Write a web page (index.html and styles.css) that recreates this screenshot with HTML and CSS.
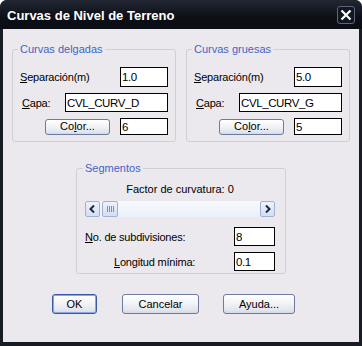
FILE: index.html
```html
<!DOCTYPE html>
<html lang="es">
<head>
    <meta charset="UTF-8">
    <title>Curvas de Nivel de Terreno</title>
    <link rel="stylesheet" href="styles.css">
</head>
<body>
    <div class="window">
        <div class="titlebar">
            <span class="title">Curvas de Nivel de Terreno</span>
            <span class="close">
                <svg width="12" height="12" viewBox="0 0 12 12"><path d="M1.5 1.5 L10.5 10.5 M10.5 1.5 L1.5 10.5" stroke="#fff" stroke-width="2.2" fill="none"/></svg>
            </span>
        </div>

        <div class="client">
            <div class="groups">
                <fieldset class="group">
                    <legend>Curvas delgadas</legend>
                    <div class="row row-sep">
                        <label><u>S</u>eparación(m)</label>
                        <input type="text" class="field field-num" value="1.0">
                    </div>
                    <div class="row row-capa">
                        <label><u>C</u>apa:</label>
                        <input type="text" class="field field-layer" value="CVL_CURV_D">
                    </div>
                    <div class="row row-color">
                        <button type="button" class="btn btn-color">Co<u>l</u>or...</button>
                        <input type="text" class="field field-num" value="6">
                    </div>
                </fieldset>

                <fieldset class="group">
                    <legend>Curvas gruesas</legend>
                    <div class="row row-sep">
                        <label><u>S</u>eparación(m)</label>
                        <input type="text" class="field field-num" value="5.0">
                    </div>
                    <div class="row row-capa">
                        <label><u>C</u>apa:</label>
                        <input type="text" class="field field-layer" value="CVL_CURV_G">
                    </div>
                    <div class="row row-color">
                        <button type="button" class="btn btn-color">Co<u>l</u>or...</button>
                        <input type="text" class="field field-num" value="5">
                    </div>
                </fieldset>
            </div>

            <fieldset class="group seg">
                <legend>Segmentos</legend>
                <div class="factor">Factor de curvatura: 0</div>
                <div class="scroll">
                    <span class="sb-btn">
                        <svg width="7" height="8" viewBox="0 0 7 8"><path d="M5 0.5 L1.5 4 L5 7.5" stroke="#1d2841" stroke-width="2" fill="none"/></svg>
                    </span>
                    <span class="sb-btn sb-thumb">
                        <svg width="7" height="6" viewBox="0 0 7 6"><path d="M0.5 0 V6 M2.5 0 V6 M4.5 0 V6 M6.5 0 V6" stroke="#7d8db0" stroke-width="1" fill="none"/></svg>
                    </span>
                    <span class="sb-track"></span>
                    <span class="sb-btn">
                        <svg width="7" height="8" viewBox="0 0 7 8"><path d="M2 0.5 L5.5 4 L2 7.5" stroke="#1d2841" stroke-width="2" fill="none"/></svg>
                    </span>
                </div>
                <div class="row row-subdiv">
                    <label><u>N</u>o. de subdivisiones:</label>
                    <input type="text" class="field field-small" value="8">
                </div>
                <div class="row row-long">
                    <label class="label-long"><u>L</u>ongitud mínima:</label>
                    <input type="text" class="field field-small" value="0.1">
                </div>
            </fieldset>

            <div class="actions">
                <button type="button" class="btn btn-default btn-ok">OK</button>
                <button type="button" class="btn btn-cancel">Cancelar</button>
                <button type="button" class="btn btn-help">Ayuda...</button>
            </div>
        </div>
    </div>
</body>
</html>
```

FILE: styles.css
```css
body {
    margin: 0;
    padding: 0;
    font-family: "Liberation Sans", Arial, sans-serif;
    font-size: 11px;
    background-color: #ffffff;
}
.window {
    width: 362px;
    height: 346px;
    background: #181c25;
    border-radius: 7px 7px 0 0;
    display: flex;
    flex-direction: column;
}
.titlebar {
    height: 29px;
    flex: none;
    display: flex;
    align-items: center;
    justify-content: space-between;
    padding: 1px 7px 0 7px;
    box-sizing: border-box;
    background: linear-gradient(#222733, #0c0f16 60%, #0a0d13);
    border-radius: 7px 7px 0 0;
}
.title {
    color: #ffffff;
    font-weight: bold;
    font-size: 13px;
}
.close {
    width: 18px;
    height: 18px;
    box-sizing: border-box;
    border: 1px solid #5d6679;
    border-radius: 3px;
    background: #121621;
    display: flex;
    align-items: center;
    justify-content: center;
}
.client {
    flex: 1;
    margin: 0 3px 4px 3px;
    padding: 14px 9px 0 9px;
    background-color: #ece9ee;
}
.groups {
    display: flex;
    gap: 10px;
}
.group {
    margin: 0;
    width: 165px;
    box-sizing: border-box;
    border: 1px solid #cfcfd5;
    border-radius: 3px;
    padding: 11px 7px 6px 7px;
    min-width: 0;
}
.group legend {
    color: #4165c6;
    line-height: 13px;
    padding: 0 2px;
    margin-left: -2px;
}
.row {
    display: flex;
    align-items: center;
    justify-content: space-between;
}
.row label {
    letter-spacing: -0.2px;
    color: #000000;
}
.row-capa,
.row-color {
    margin-top: 6px;
}
.row-capa label {
    margin-left: 2px;
}
.field {
    box-sizing: border-box;
    margin: 0;
    border: 1px solid #000000;
    background: #ffffff;
    padding: 0 1px;
    font-family: "Liberation Sans", Arial, sans-serif;
    font-size: 11.5px;
    letter-spacing: -0.4px;
    color: #000000;
    outline: none;
}
.field-num {
    width: 48px;
    height: 20px;
}
.field-layer {
    width: 103px;
    height: 19px;
}
.row-color .field-num {
    height: 17px;
}
.field-small {
    width: 41px;
    height: 19px;
}
.btn {
    box-sizing: border-box;
    margin: 0;
    padding: 0;
    border: 1px solid #6d7b9e;
    border-radius: 3px;
    background: linear-gradient(#ffffff, #f1f2f6 50%, #e2e5ee 85%, #d3d8e5);
    font-family: "Liberation Sans", Arial, sans-serif;
    font-size: 11px;
    color: #000000;
    cursor: pointer;
}
.btn-color {
    width: 65px;
    height: 16px;
    margin-left: 25px;
    line-height: 13px;
}
.seg {
    width: 210px;
    margin: 20px auto 0 auto;
    padding: 8px 10px 2px 8px;
}
.factor {
    text-align: center;
    line-height: 13px;
    color: #000000;
}
.scroll {
    display: flex;
    height: 16px;
    margin-top: 5px;
    background: linear-gradient(#f7f9fd, #eaf0fa);
}
.sb-btn {
    width: 15px;
    height: 16px;
    flex: none;
    box-sizing: border-box;
    border: 1px solid #a2b1d0;
    border-radius: 2px;
    background: linear-gradient(#eef2fb, #d4def2);
    display: flex;
    align-items: center;
    justify-content: center;
}
.sb-thumb {
    width: 16px;
    margin-left: 2px;
}
.sb-track {
    flex: 1;
}
.row-subdiv {
    margin-top: 10px;
}
.row-long {
    margin-top: 6px;
}
.label-long {
    margin-left: 29px;
}
.actions {
    display: flex;
    margin-top: 20px;
    padding-left: 40px;
}
.actions .btn {
    height: 20px;
}
.btn-ok {
    width: 45px;
}
.btn-cancel {
    width: 77px;
    margin-left: 25px;
}
.btn-help {
    width: 72px;
    margin-left: 24px;
}
.btn-default {
    border-color: #3a58a8;
    box-shadow: inset 0 0 0 1px #8aa6e3;
}
```
